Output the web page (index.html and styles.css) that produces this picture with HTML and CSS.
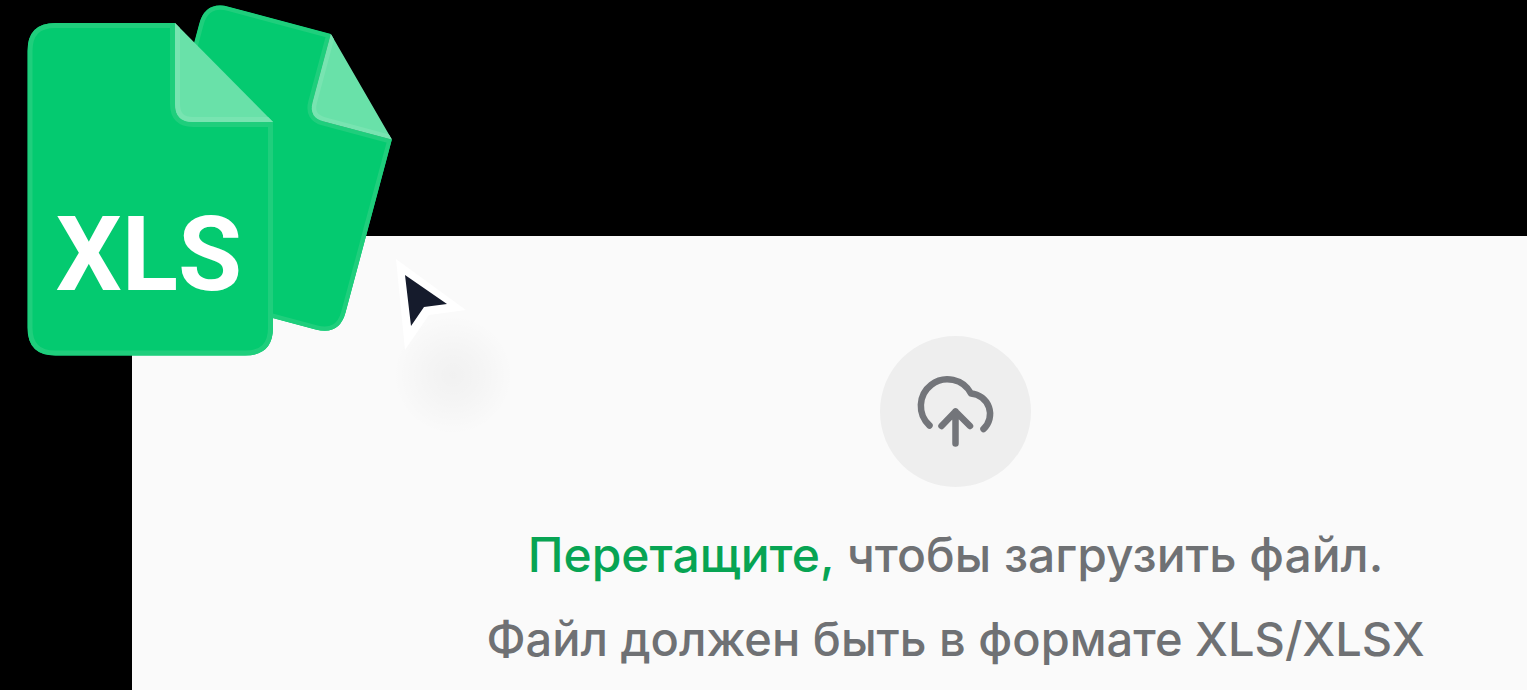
FILE: index.html
```
<!DOCTYPE html>
<html lang="ru">
<head>
  <meta charset="utf-8">
  <title>Загрузка файла</title>
  <link rel="stylesheet" href="styles.css">
</head>
<body>
  <main class="dropzone">
    <div class="upload-badge">
      <svg class="upload-icon" viewBox="0 0 151 151" aria-hidden="true">
        <path d="M49.5 89.5A26.6 26.6 0 1 1 91 57.5A20.5 20.5 0 0 1 103.5 93"/>
        <path d="M75.5 107.5V75.5M61.5 90L75.5 75.5L90 90"/>
      </svg>
    </div>
    <p class="hint"><span class="accent">Перетащите,</span> чтобы загрузить файл.</p>
    <p class="hint hint-format">Файл должен быть в формате XLS/XLSX</p>
  </main>

  <svg class="drag-preview" viewBox="0 0 540 460" role="img" aria-label="Файлы XLS">
    <defs>
      <radialGradient id="shade">
        <stop offset="0" stop-color="#000" stop-opacity=".036"/>
        <stop offset=".4" stop-color="#000" stop-opacity=".024"/>
        <stop offset="1" stop-color="#000" stop-opacity="0"/>
      </radialGradient>
      <path id="sheet-shape" d="M28 0H147.5V81Q147.5 99 165.5 99H245.5V304.5Q245.5 332.5 217.5 332.5H28Q0 332.5 0 304.5V28Q0 0 28 0Z"/>
      <path id="fold-shape" d="M147.5 0V81Q147.5 99 165.5 99H245.5Z"/>
      <clipPath id="sheet-clip"><use href="#sheet-shape"/></clipPath>
      <clipPath id="fold-clip"><use href="#fold-shape"/></clipPath>
      <g id="sheet">
        <use href="#sheet-shape" class="sheet-fill"/>
        <use href="#sheet-shape" class="sheet-edge" clip-path="url(#sheet-clip)"/>
        <use href="#fold-shape" class="fold-fill"/>
        <path class="fold-edge" d="M147.5 0V81Q147.5 99 165.5 99H245.5" clip-path="url(#fold-clip)"/>
      </g>
    </defs>
    <use href="#sheet" transform="translate(205.5 .5) rotate(15) scale(.88 .87)"/>
    <use href="#sheet" transform="translate(27.5 23)"/>
    <text class="sheet-label" x="149" y="290">XLS</text>
    <circle cx="453" cy="375" r="60" fill="url(#shade)"/>
    <path class="cursor-outline" d="M396 259L466 310L429 315L405 350Z"/>
    <path class="cursor-body" d="M405 275L447 304L424 307L411 326Z"/>
  </svg>
</body>
</html>
```

FILE: styles.css
```
body {
  margin: 0;
  min-height: 100vh;
  display: flex;
  flex-direction: column;
  background: #000;
  font-family: Inter, "Liberation Sans", sans-serif;
}

.dropzone {
  flex: 1;
  display: flex;
  flex-direction: column;
  align-items: center;
  margin: 236px 0 0 132px;
  padding: 100px 0 0 252px;
  background: #fafafa;
}

.upload-badge {
  width: 151px;
  height: 151px;
  margin-bottom: 26px;
  border-radius: 50%;
  background: #eee;
}

.upload-icon {
  display: block;
  fill: none;
  stroke: #73757a;
  stroke-width: 6.5;
  stroke-linecap: round;
  stroke-linejoin: round;
}

.hint {
  margin: 0;
  color: #6f7174;
  font-size: 48px;
  font-weight: 500;
  line-height: 84px;
  white-space: nowrap;
}

.hint-format {
  font-size: 47px;
}

.accent {
  color: #07a453;
}

.drag-preview {
  position: absolute;
  top: 0;
  left: 0;
  width: 540px;
  height: 460px;
  pointer-events: none;
}

.sheet-fill {
  fill: #04ca70;
}

.sheet-edge {
  fill: none;
  stroke: #1fce7c;
  stroke-width: 10;
}

.fold-fill {
  fill: #69e1a9;
}

.fold-edge {
  fill: none;
  stroke: #78e4b1;
  stroke-width: 10;
}

.sheet-label {
  fill: #fff;
  font-family: Roboto, "Liberation Sans", sans-serif;
  font-size: 104px;
  font-weight: 700;
  text-anchor: middle;
}

.cursor-outline {
  fill: #fff;
}

.cursor-body {
  fill: #151b2c;
}
```
